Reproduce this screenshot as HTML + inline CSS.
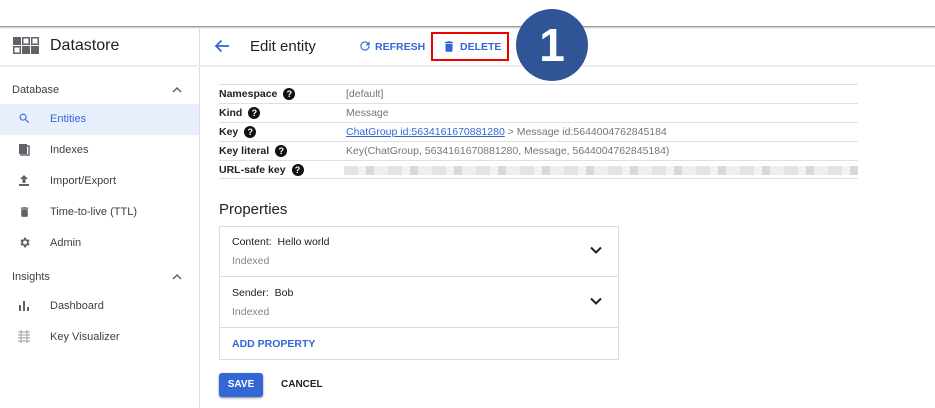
<!DOCTYPE html>
<html><head><meta charset="utf-8"><style>
*{margin:0;padding:0;box-sizing:border-box}
body{width:935px;height:408px;overflow:hidden;background:#fff;font-family:"Liberation Sans",Arial,sans-serif;color:#202124;position:relative}
.topshadow{position:absolute;left:0;top:26px;width:935px;height:3px;background:linear-gradient(#888,#ddd 60%,#fff)}
.abs{position:absolute}
.side{position:absolute;left:0;top:29px;width:200px;height:379px;border-right:1px solid #dadce0}
.hdrline{position:absolute;left:0;top:65px;width:935px;height:2px;background:#eee}
.nav{position:absolute;left:0;width:199px;height:31px;font-size:11px;color:#3c4043}
.nav .t{position:absolute;left:50px;top:9px}
.nav svg{position:absolute;left:18px;top:8px}
.sec{position:absolute;left:12px;font-size:11px;color:#3c4043}
.chev{position:absolute;left:172px;width:10px;height:10px}
.row{position:absolute;left:219px;width:639px;height:19px;border-top:1px solid #e0e0e0;font-size:10.5px}
.row .l{position:absolute;left:0;top:3px;font-weight:bold;color:#202124;line-height:13px}
.row .v{position:absolute;left:127px;top:3px;color:#757575;line-height:13px}
.q{display:inline-block;width:12px;height:12px;border-radius:50%;background:#111;color:#fff;font-size:9px;text-align:center;line-height:12px;font-weight:bold;vertical-align:top;margin-left:6px}
.card{position:absolute;left:219px;width:400px;border:1px solid #dadce0}
</style></head><body>
<div class="topshadow"></div>
<div class="side"></div>
<div class="hdrline"></div>
<svg class="abs" style="left:13px;top:37px" width="26" height="18"><g fill="#5f6368"><rect x="0" y="0" width="8" height="8"/><rect x="9.75" y=".75" width="6.5" height="6.5" fill="none" stroke="#5f6368" stroke-width="1.5"/><rect x="18.75" y=".75" width="6.5" height="6.5" fill="none" stroke="#5f6368" stroke-width="1.5"/><rect x=".75" y="9.75" width="6.5" height="6.5" fill="none" stroke="#5f6368" stroke-width="1.5"/><rect x="9" y="9" width="8" height="8"/><rect x="18" y="9" width="8" height="8"/></g></svg>
<div class="abs" style="left:50px;top:37px;font-size:16px;color:#202124">Datastore</div>
<svg class="abs" style="left:214px;top:39px" width="16" height="14"><path d="M15 7H2M7.5 1.5L2 7l5.5 5.5" stroke="#3367d6" stroke-width="1.8" fill="none"/></svg>
<div class="abs" style="left:250px;top:38px;font-size:15px">Edit entity</div>
<svg class="abs" style="left:358px;top:39px" width="14" height="14" viewBox="0 0 24 24"><path fill="#3367d6" d="M17.65 6.35A7.96 7.96 0 0012 4a8 8 0 108 8h-2.1A6 6 0 1112 6c1.66 0 3.1.69 4.22 1.78L13 11h7V4l-2.35 2.35z"/></svg>
<div class="abs" style="left:375px;top:41px;font-size:10.5px;font-weight:bold;color:#3367d6">REFRESH</div>
<div class="abs" style="left:431px;top:32px;width:78px;height:29px;border:2.5px solid #e00"></div>
<svg class="abs" style="left:442px;top:39px" width="14" height="15" viewBox="0 0 24 24"><path fill="#3367d6" d="M6 19c0 1.1.9 2 2 2h8c1.1 0 2-.9 2-2V7H6v12zM19 4h-3.5l-1-1h-5l-1 1H5v2h14V4z"/></svg>
<div class="abs" style="left:460px;top:41px;font-size:10.5px;font-weight:bold;color:#3367d6">DELETE</div>
<div class="abs" style="left:516px;top:9px;width:72px;height:72px;border-radius:50%;background:#2f5597;color:#fff;font-size:46px;font-weight:bold;text-align:center;line-height:72px">1</div>
<div class="sec" style="top:84px">Database</div>
<svg class="chev" style="top:85px"><path d="M1 7l4-4 4 4" stroke="#5f6368" stroke-width="1.5" fill="none"/></svg>
<div class="nav" style="top:104px;background:#e8f0fe;color:#3367d6"><svg width="13" height="13" viewBox="0 0 24 24"><path fill="#3367d6" d="M15.5 14h-.8l-.3-.3A6.5 6.5 0 109.5 16a6.5 6.5 0 004.2-1.6l.3.3v.8l5 5 1.5-1.5-5-5zm-6 0a4.5 4.5 0 110-9 4.5 4.5 0 010 9z"/></svg><span class="t">Entities</span></div>
<div class="nav" style="top:135px"><svg width="12" height="13"><rect x="1" y="1" width="8" height="10" fill="#5f6368"/><rect x="3" y="3" width="8" height="9" fill="none" stroke="#5f6368" stroke-width="1.4"/></svg><span class="t">Indexes</span></div>
<div class="nav" style="top:166px"><svg width="12" height="13"><path d="M6 1L2 5h2.5v4h3V5H10z M1 10v2h10v-2" fill="#5f6368"/></svg><span class="t">Import/Export</span></div>
<div class="nav" style="top:197px"><svg width="13" height="14" viewBox="0 0 24 24"><path fill="#5f6368" d="M6 19c0 1.1.9 2 2 2h8c1.1 0 2-.9 2-2V7H6v12zM19 4h-3.5l-1-1h-5l-1 1H5v2h14V4z"/></svg><span class="t">Time-to-live (TTL)</span></div>
<div class="nav" style="top:228px"><svg width="13" height="13" viewBox="0 0 24 24"><path fill="#5f6368" d="M19.4 13a7.5 7.5 0 000-2l2.1-1.6-2-3.5-2.5 1a7 7 0 00-1.7-1L15 3h-4l-.4 2.9a7 7 0 00-1.7 1l-2.5-1-2 3.5L6.5 11a7.5 7.5 0 000 2l-2.1 1.6 2 3.5 2.5-1a7 7 0 001.7 1L11 21h4l.4-2.9a7 7 0 001.7-1l2.5 1 2-3.5zM13 15.5a3.5 3.5 0 110-7 3.5 3.5 0 010 7z"/></svg><span class="t">Admin</span></div>
<div class="sec" style="top:271px">Insights</div>
<svg class="chev" style="top:272px"><path d="M1 7l4-4 4 4" stroke="#5f6368" stroke-width="1.5" fill="none"/></svg>
<div class="nav" style="top:291px"><svg width="12" height="13"><rect x="1" y="6" width="2" height="6" fill="#5f6368"/><rect x="5" y="2" width="2" height="10" fill="#5f6368"/><rect x="9" y="8" width="2" height="4" fill="#5f6368"/></svg><span class="t">Dashboard</span></div>
<div class="nav" style="top:322px"><svg width="12" height="13"><path d="M0 2h12M0 5h12M0 8h12M0 11h12M3 0v13M9 0v13" stroke="#9aa0a6" stroke-width="1" fill="none"/></svg><span class="t">Key Visualizer</span></div>
<div class="row" style="top:84px"><span class="l">Namespace<span class="q">?</span></span><span class="v">[default]</span></div>
<div class="row" style="top:103px"><span class="l">Kind<span class="q">?</span></span><span class="v">Message</span></div>
<div class="row" style="top:122px"><span class="l">Key<span class="q">?</span></span><span class="v"><span style="color:#3367d6;text-decoration:underline">ChatGroup id:5634161670881280</span> &gt; Message id:5644004762845184</span></div>
<div class="row" style="top:141px"><span class="l">Key literal<span class="q">?</span></span><span class="v">Key(ChatGroup, 5634161670881280, Message, 5644004762845184)</span></div>
<div class="row" style="top:160px;border-bottom:1px solid #e0e0e0;height:19px"><span class="l">URL-safe key<span class="q">?</span></span><span class="abs" style="left:125px;top:5px;width:514px;height:9px;background:repeating-linear-gradient(90deg,#e4e4e4 0 14px,#f2f2f2 14px 22px,#d8d8d8 22px 30px,#efefef 30px 44px)"></span></div>
<div class="abs" style="left:219px;top:201px;font-size:15px">Properties</div>
<div class="card" style="top:226px;height:134px"></div>
<div class="abs" style="left:219px;top:276px;width:400px;height:1px;background:#dadce0"></div>
<div class="abs" style="left:219px;top:327px;width:400px;height:1px;background:#dadce0"></div>
<div class="abs" style="left:232px;top:236px;font-size:10.5px">Content:&nbsp; Hello world</div>
<div class="abs" style="left:232px;top:255px;font-size:10.5px;color:#80868b">Indexed</div>
<div class="abs" style="left:232px;top:287px;font-size:10.5px">Sender:&nbsp; Bob</div>
<div class="abs" style="left:232px;top:306px;font-size:10.5px;color:#80868b">Indexed</div>
<svg class="abs" style="left:590px;top:246px" width="12" height="8"><path d="M1 1.5l5 5 5-5" stroke="#202124" stroke-width="2" fill="none"/></svg>
<svg class="abs" style="left:590px;top:297px" width="12" height="8"><path d="M1 1.5l5 5 5-5" stroke="#202124" stroke-width="2" fill="none"/></svg>
<div class="abs" style="left:232px;top:338px;font-size:10.5px;font-weight:bold;color:#3367d6">ADD PROPERTY</div>
<div class="abs" style="left:219px;top:373px;width:44px;height:24px;background:#3367d6;border-radius:3px;color:#fff;font-size:10px;font-weight:bold;text-align:center;line-height:24px;box-shadow:0 1px 2px #888">SAVE</div>
<div class="abs" style="left:281px;top:379px;font-size:10px;font-weight:bold;color:#202124">CANCEL</div>
</body></html>
